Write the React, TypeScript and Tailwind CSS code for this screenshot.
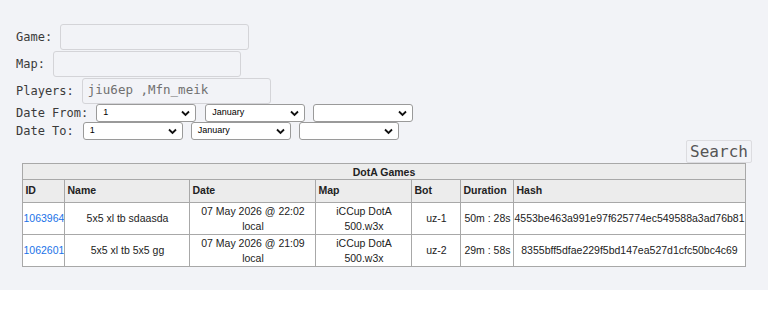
import React from "react";

const mono = { fontFamily: '"DejaVu Sans Mono", "Liberation Mono", monospace' };

function Sel({ value, w = "w-[100px]" }: { value: string; w?: string }) {
  return (
    <div className={`relative ${w} h-[18px] bg-white border border-[#9a9a9a] rounded-[3px] flex items-center pl-[6px] text-[9px] text-black`} style={{ fontFamily: '"Liberation Sans", Arial, sans-serif' }}>
      <span>{value}</span>
      <svg className="absolute right-[5px] top-[5px]" width="9" height="7" viewBox="0 0 9 7">
        <path d="M1 1.5 L4.5 5 L8 1.5" fill="none" stroke="#111" strokeWidth="1.8" />
      </svg>
    </div>
  );
}

const rows = [
  { id: "1063964", name: "5x5 xl tb sdaasda", date: "07 May 2026 @ 22:02", bot: "uz-1", dur: "50m : 28s", hash: "4553be463a991e97f625774ec549588a3ad76b81" },
  { id: "1062601", name: "5x5 xl tb 5x5 gg", date: "07 May 2026 @ 21:09", bot: "uz-2", dur: "29m : 58s", hash: "8355bff5dfae229f5bd147ea527d1cfc50bc4c69" },
];

export default function App() {
  return (
    <div className="w-[768px] h-[318px] bg-white">
      <div className="bg-[#f2f3f7] h-[290px] pt-[23px] px-[16px] text-[12px] text-[#3a3a3a]" style={mono}>
        <div className="flex items-center gap-[8px] h-[27px]">
          <span>Game:</span>
          <div className="w-[189px] h-[26px] border border-[#d4d4d8] rounded-[3px]" />
        </div>
        <div className="flex items-center gap-[8px] h-[27px]">
          <span>Map:</span>
          <div className="w-[188px] h-[26px] border border-[#d4d4d8] rounded-[3px]" />
        </div>
        <div className="flex items-center gap-[8px] h-[27px]">
          <span>Players:</span>
          <div className="w-[189px] h-[26px] border border-[#d4d4d8] rounded-[3px] flex items-center pl-[5px] text-[#707070] text-[12.5px]">
            jiu6ep ,Mfn_meik
          </div>
        </div>
        <div className="flex items-center h-[18px]">
          <span className="mr-[8px]">Date From:</span>
          <Sel value="1" />
          <div className="w-[9px]" />
          <Sel value="January" />
          <div className="w-[8px]" />
          <Sel value="" />
        </div>
        <div className="flex items-center h-[18px]">
          <span className="mr-[9px]">Date To:</span>
          <Sel value="1" />
          <div className="w-[8px]" />
          <Sel value="January" />
          <div className="w-[8px]" />
          <Sel value="" />
        </div>
        <div className="flex justify-end">
          <div className="w-[66px] h-[23px] border border-[#dcdce0] rounded-[2px] flex items-center justify-center text-[16px] text-[#555]">
            Search
          </div>
        </div>
        <div className="flex justify-center -mx-[16px]">
          <table className="w-[722px] table-fixed border-collapse border border-[#9c9c9c] text-[10.5px] text-[#222]" style={{ fontFamily: '"Liberation Sans", Arial, sans-serif' }}>
            <colgroup>
              <col className="w-[42px]" />
              <col className="w-[125px]" />
              <col className="w-[126px]" />
              <col className="w-[96px]" />
              <col className="w-[49px]" />
              <col className="w-[53px]" />
              <col className="w-[231px]" />
            </colgroup>
            <tbody>
              <tr className="bg-[#ececec] h-[16px]">
                <td colSpan={7} className="border border-[#a8a8a8] text-center font-bold leading-[14px]">DotA Games</td>
              </tr>
              <tr className="bg-[#ececec] h-[23px] font-bold text-left">
                <td className="border border-[#a8a8a8] px-[2px]">ID</td>
                <td className="border border-[#a8a8a8] px-[2px]">Name</td>
                <td className="border border-[#a8a8a8] px-[2px]">Date</td>
                <td className="border border-[#a8a8a8] px-[2px]">Map</td>
                <td className="border border-[#a8a8a8] px-[2px]">Bot</td>
                <td className="border border-[#a8a8a8] px-[2px]">Duration</td>
                <td className="border border-[#a8a8a8] px-[2px]">Hash</td>
              </tr>
              {rows.map((r) => (
                <tr key={r.id} className="bg-white h-[32px] text-center leading-[15px]">
                  <td className="border border-[#a8a8a8] text-left text-[#1a73e8] px-0 whitespace-nowrap overflow-hidden">{r.id}</td>
                  <td className="border border-[#a8a8a8] whitespace-nowrap">{r.name}</td>
                  <td className="border border-[#a8a8a8] whitespace-nowrap">{r.date}<br />local</td>
                  <td className="border border-[#a8a8a8] whitespace-nowrap">iCCup DotA<br />500.w3x</td>
                  <td className="border border-[#a8a8a8]">{r.bot}</td>
                  <td className="border border-[#a8a8a8] px-0 whitespace-nowrap">{r.dur}</td>
                  <td className="border border-[#a8a8a8] px-0 whitespace-nowrap overflow-hidden">{r.hash}</td>
                </tr>
              ))}
            </tbody>
          </table>
        </div>
      </div>
    </div>
  );
}
